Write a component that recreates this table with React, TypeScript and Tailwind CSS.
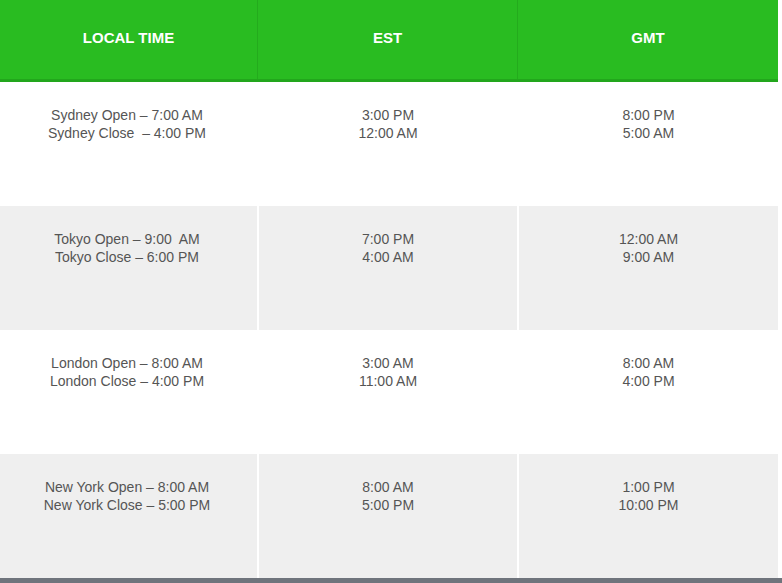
import React from "react";

const rows = [
  { local: ["Sydney Open – 7:00 AM", "Sydney Close  – 4:00 PM"], est: ["3:00 PM", "12:00 AM"], gmt: ["8:00 PM", "5:00 AM"] },
  { local: ["Tokyo Open – 9:00  AM", "Tokyo Close – 6:00 PM"], est: ["7:00 PM", "4:00 AM"], gmt: ["12:00 AM", "9:00 AM"] },
  { local: ["London Open – 8:00 AM", "London Close – 4:00 PM"], est: ["3:00 AM", "11:00 AM"], gmt: ["8:00 AM", "4:00 PM"] },
  { local: ["New York Open – 8:00 AM", "New York Close – 5:00 PM"], est: ["8:00 AM", "5:00 PM"], gmt: ["1:00 PM", "10:00 PM"] },
];

function Cell({ lines, className }: { lines: string[]; className: string }) {
  return (
    <div className={"h-[124px] pt-[24px] text-center text-[14px] leading-[18px] text-[#555555] whitespace-pre " + className}>
      {lines.map((l, i) => (
        <div key={i}>{l}</div>
      ))}
    </div>
  );
}

export default function App() {
  return (
    <div className="w-[782px] h-[583px] overflow-hidden bg-white" style={{ fontFamily: '"Liberation Sans", Arial, sans-serif' }}>
      <div className="w-[778px]">
        <div className="flex h-[82px] bg-[#29bc21] border-b-[3px] border-[#22a61c] text-white font-bold text-[15px] uppercase">
          <div className="w-[258px] border-r border-[#24ab1d] flex items-center justify-center pb-[2px]">Local Time</div>
          <div className="w-[260px] border-r border-[#24ab1d] flex items-center justify-center pb-[2px]">EST</div>
          <div className="flex-1 flex items-center justify-center pb-[2px]">GMT</div>
        </div>
        {rows.map((r, i) => {
          const bg = i % 2 === 1 ? "bg-[#efefef]" : "bg-white";
          return (
            <div key={i} className={"flex " + bg}>
              <Cell lines={r.local} className="w-[259px] pr-[3px] border-r-2 border-white" />
              <Cell lines={r.est} className="w-[260px] border-r-2 border-white" />
              <Cell lines={r.gmt} className="flex-1" />
            </div>
          );
        })}
      </div>
      <div className="h-[10px] bg-[#6f747c]" />
    </div>
  );
}
